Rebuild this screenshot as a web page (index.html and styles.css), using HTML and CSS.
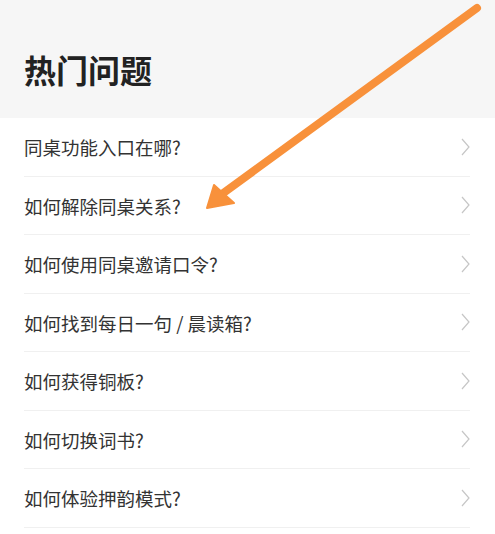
FILE: index.html
```html
<!DOCTYPE html>
<html lang="zh">
<head>
<meta charset="utf-8">
<link rel="stylesheet" href="styles.css">
</head>
<body>
<div class="page">
  <header class="header"><h1 class="title">热门问题</h1></header>
  <ul class="list">
    <li class="row"><span class="q">同桌功能入口在哪?</span><svg class="chev" viewBox="0 0 9 18"><polyline points="1,1 8,9 1,17"/></svg></li>
    <li class="row"><span class="q">如何解除同桌关系?</span><svg class="chev" viewBox="0 0 9 18"><polyline points="1,1 8,9 1,17"/></svg></li>
    <li class="row"><span class="q">如何使用同桌邀请口令?</span><svg class="chev" viewBox="0 0 9 18"><polyline points="1,1 8,9 1,17"/></svg></li>
    <li class="row"><span class="q">如何找到每日一句 / 晨读箱?</span><svg class="chev" viewBox="0 0 9 18"><polyline points="1,1 8,9 1,17"/></svg></li>
    <li class="row"><span class="q">如何获得铜板?</span><svg class="chev" viewBox="0 0 9 18"><polyline points="1,1 8,9 1,17"/></svg></li>
    <li class="row"><span class="q">如何切换词书?</span><svg class="chev" viewBox="0 0 9 18"><polyline points="1,1 8,9 1,17"/></svg></li>
    <li class="row"><span class="q">如何体验押韵模式?</span><svg class="chev" viewBox="0 0 9 18"><polyline points="1,1 8,9 1,17"/></svg></li>
  </ul>
  <svg class="arrow" viewBox="0 0 495 534" width="495" height="534">
    <line x1="477" y1="8" x2="222" y2="194"/>
    <polygon points="207,208 214,185 234,203"/>
  </svg>
</div>
</body>
</html>
```
FILE: styles.css
```css
html, body {
  margin: 0;
  padding: 0;
  background: #ffffff;
}
.page {
  position: relative;
  width: 495px;
  height: 534px;
  overflow: hidden;
  font-family: "Noto Sans CJK SC", "Noto Sans", sans-serif;
}
.header {
  box-sizing: border-box;
  height: 118px;
  background: #f6f6f6;
  padding: 48px 24px 0;
}
.title {
  margin: 0;
  font-size: 32px;
  line-height: 42px;
  font-weight: 700;
  color: #222222;
}
.list {
  list-style: none;
  margin: 0;
  padding: 0 25px 0 24px;
}
.row {
  box-sizing: border-box;
  height: 58.5px;
  display: flex;
  align-items: center;
  justify-content: space-between;
  border-bottom: 1px solid #f0f0f0;
}
.q {
  font-size: 18.5px;
  color: #333333;
  line-height: 1;
  padding-top: 1px;
}
.chev {
  width: 9px;
  height: 18px;
  margin-right: 0;
  fill: none;
  stroke: #c6c6c6;
  stroke-width: 1.2;
}
.arrow {
  position: absolute;
  left: 0;
  top: 0;
  pointer-events: none;
}
.arrow line {
  stroke: #f8913b;
  stroke-width: 8;
  stroke-linecap: round;
}
.arrow polygon {
  fill: #f8913b;
  stroke: #f8913b;
  stroke-width: 2;
  stroke-linejoin: round;
}
```
